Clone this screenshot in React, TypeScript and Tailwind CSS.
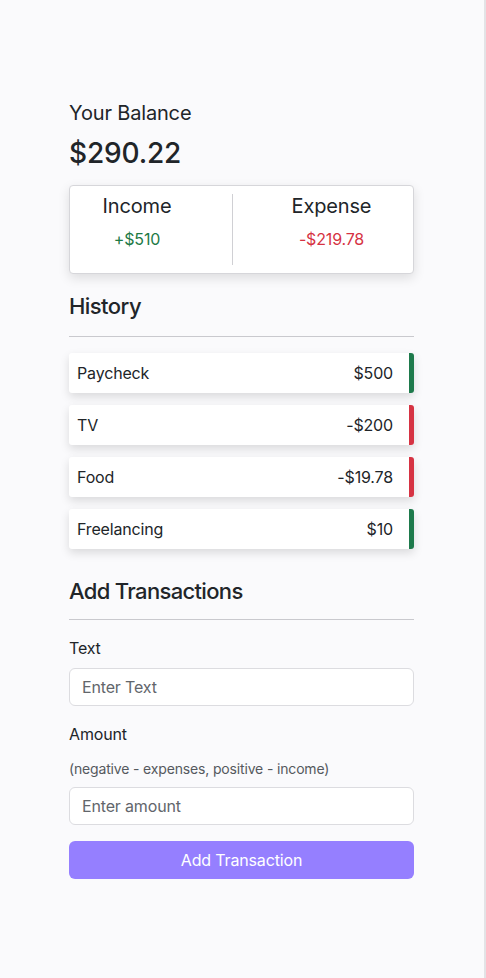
import React, { useState } from 'react';

type Tx = { id: number; text: string; amount: number };

const TXS: Tx[] = [
  { id: 1, text: 'Paycheck', amount: 500 },
  { id: 2, text: 'TV', amount: -200 },
  { id: 3, text: 'Food', amount: -19.78 },
  { id: 4, text: 'Freelancing', amount: 10 },
];

const money = (n: number) => {
  const abs = Math.abs(n);
  const s = Number.isInteger(abs) ? String(abs) : abs.toFixed(2);
  return (n < 0 ? '-$' : '$') + s;
};

export default function App() {
  const [text, setText] = useState('');
  const [amount, setAmount] = useState('');

  return (
    <div
      className="min-h-[978px] w-[486px] bg-[#fafafc] text-[#212529] border-r-2 border-[#e3e3e6] tracking-[-0.01em]"
      style={{ fontFamily: 'Inter, "Noto Sans", sans-serif' }}
    >
      <div className="w-[345px] ml-[69px] pt-[101px] pb-10">
        <h4 className="text-[20px] leading-[24px] font-normal">Your Balance</h4>
        <h1 className="mt-[11px] text-[28px] leading-[34px] font-medium">$290.22</h1>

        <div className="mt-[15px] h-[89px] bg-white border border-[#d6d6da] rounded-[4px] shadow-[0_4px_12px_rgba(0,0,0,0.12)] flex py-2">
          <div className="w-[134px] text-center">
            <h4 className="text-[20px] leading-[24px]">Income</h4>
            <p className="mt-[9px] text-[16px] leading-[24px] text-[#1e7a46]">+$510</p>
          </div>
          <div className="ml-[28px] w-px bg-[#d0d0d4]"></div>
          <div className="ml-[17px] flex-1 text-center">
            <h4 className="text-[20px] leading-[24px]">Expense</h4>
            <p className="mt-[9px] text-[16px] leading-[24px] text-[#d63343]">-$219.78</p>
          </div>
        </div>

        <h3 className="mt-[19px] text-[22px] leading-[26px] font-medium tracking-[-0.025em]">History</h3>
        <hr className="mt-[17px] border-0 border-t border-[#c9c9ce]" />

        <ul className="mt-[16px] flex flex-col gap-3">
          {TXS.map((t) => (
            <li
              key={t.id}
              className={
                'h-10 bg-white rounded-[3px] flex items-center justify-between pl-2 pr-4 text-[16px] shadow-[0_4px_10px_rgba(0,0,0,0.13)] border-r-[5px] ' +
                (t.amount < 0 ? 'border-[#d63343]' : 'border-[#1e7a4c]')
              }
            >
              <span>{t.text}</span>
              <span>{money(t.amount)}</span>
            </li>
          ))}
        </ul>

        <h3 className="mt-[29px] text-[22px] leading-[26px] font-medium tracking-[-0.03em]">Add Transactions</h3>
        <hr className="mt-[15px] border-0 border-t border-[#c9c9ce]" />

        <form onSubmit={(e) => e.preventDefault()}>
          <label className="block mt-4 text-[16px] leading-6">Text</label>
          <input
            value={text}
            onChange={(e) => setText(e.target.value)}
            placeholder="Enter Text"
            className="mt-2 block w-full h-[38px] px-3 bg-white border border-[#dcdce0] rounded-md text-[16px] placeholder:text-[#62666b] outline-none"
          />
          <label className="block mt-4 text-[16px] leading-6">Amount</label>
          <p className="mt-[13px] text-[14px] leading-5 text-[#55595e]">
            (negative - expenses, positive - income)
          </p>
          <input
            value={amount}
            onChange={(e) => setAmount(e.target.value)}
            placeholder="Enter amount"
            className="mt-2 block w-full h-[38px] px-3 bg-white border border-[#dcdce0] rounded-md text-[16px] placeholder:text-[#62666b] outline-none"
          />
          <button
            type="submit"
            className="mt-4 w-full h-[38px] rounded-md bg-[#957fff] text-white text-[16px]"
          >
            Add Transaction
          </button>
        </form>
      </div>
    </div>
  );
}
